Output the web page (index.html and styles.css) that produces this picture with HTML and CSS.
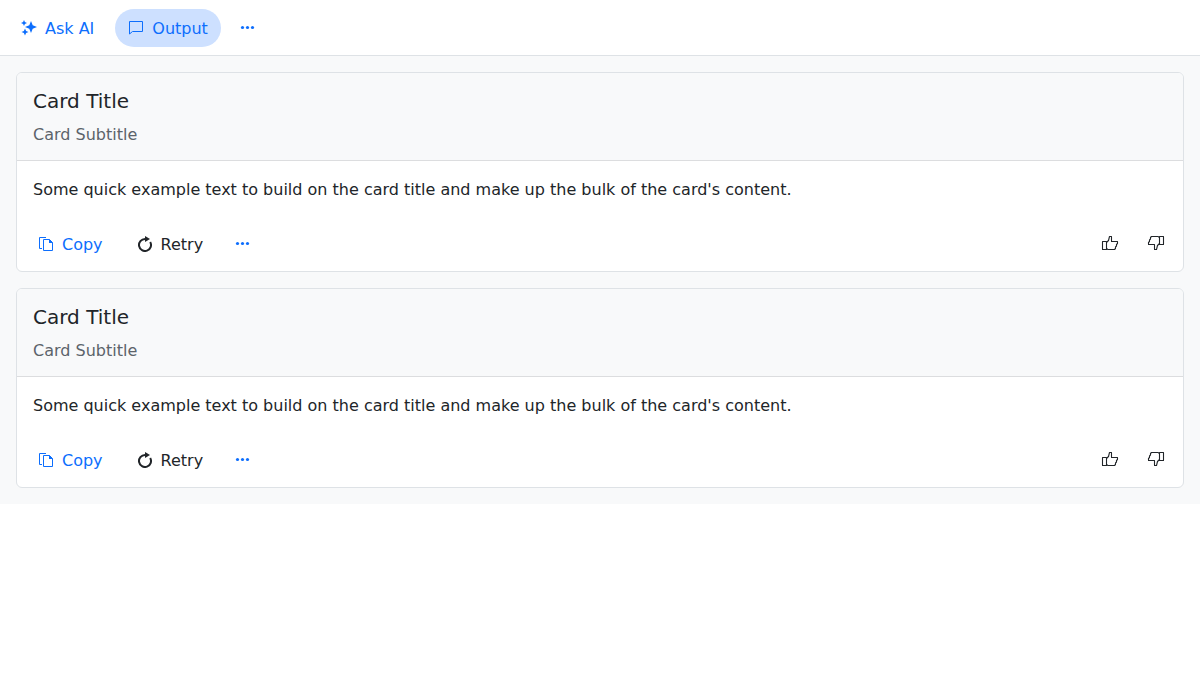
FILE: index.html
```html
<!DOCTYPE html>
<html lang="en">
<head>
<meta charset="utf-8">
<meta name="viewport" content="width=device-width, initial-scale=1">
<title>Output</title>
<link rel="stylesheet" href="styles.css">
</head>
<body>
<svg class="symbols" aria-hidden="true">
  <symbol id="sparkle" viewBox="0 0 16 16"><path fill="currentColor" d="M10 1L11.700 5.300L16 7L11.700 8.700L10 13L8.300 8.700L4 7L8.300 5.300ZM3 0L3.900 2.100L6 3L3.900 3.900L3 6L2.100 3.900L0 3L2.100 2.100ZM4 8.500L5.100 10.900L7.500 12L5.100 13.100L4 15.500L2.900 13.100L.5 12L2.900 10.900Z"/></symbol>
  <symbol id="comment" viewBox="0 0 16 16"><path fill="none" stroke="currentColor" d="M1.500 14V1.500H14.500V11.500H4.500L1.500 14"/></symbol>
  <symbol id="copy" viewBox="0 0 16 16"><path fill="none" stroke="currentColor" d="M8 1.500H1.500V12.500H4M5.500 3.500H11.500L14.500 6.500V14.500H5.500Z"/><path fill="currentColor" d="M11 3L15 7H11Z"/></symbol>
  <symbol id="retry" viewBox="0 0 16 16"><path fill="none" stroke="currentColor" stroke-width="2" d="M9 3H8A6 6 0 1 0 13.200 6"/><path fill="currentColor" d="M8 0L13 3L8 6Z"/></symbol>
  <symbol id="more" viewBox="0 0 16 16"><circle fill="currentColor" cx="2.500" cy="7.500" r="1.600"/><circle fill="currentColor" cx="7.500" cy="7.500" r="1.600"/><circle fill="currentColor" cx="12.500" cy="7.500" r="1.600"/></symbol>
  <symbol id="thumb" viewBox="0 0 18 16"><path fill="none" stroke="currentColor" stroke-width="1.100" stroke-linejoin="round" d="M1.500 6.500H5.500V14.500H1.500ZM5.500 7.500L7.500 5.500L8.500 1.500H10.500V6.500H16.500V8.500L15.500 9.500V11L14.500 12V13.500L13.500 14.500H7L5.500 13.500"/></symbol>
</svg>
<header class="toolbar">
  <button class="btn primary" type="button"><svg class="icon"><use href="#sparkle"/></svg><span class="label">Ask AI</span></button>
  <button class="btn primary active" type="button"><svg class="icon"><use href="#comment"/></svg><span class="label">Output</span></button>
  <button class="btn primary icon-btn" type="button" aria-label="More"><svg class="icon"><use href="#more"/></svg></button>
</header>
<main class="output">
  <article class="card">
    <div class="card-header">
      <h2 class="title">Card Title</h2>
      <p class="subtitle">Card Subtitle</p>
    </div>
    <p class="content">Some quick example text to build on the card title and make up the bulk of the card's content.</p>
    <div class="actions">
      <button class="btn primary" type="button"><svg class="icon"><use href="#copy"/></svg><span class="label">Copy</span></button>
      <button class="btn" type="button"><svg class="icon"><use href="#retry"/></svg><span class="label">Retry</span></button>
      <button class="btn primary icon-btn" type="button" aria-label="More"><svg class="icon"><use href="#more"/></svg></button>
      <div class="feedback">
        <button class="btn icon-btn" type="button" aria-label="Like"><svg class="icon thumb"><use href="#thumb"/></svg></button>
        <button class="btn icon-btn" type="button" aria-label="Dislike"><svg class="icon thumb down"><use href="#thumb"/></svg></button>
      </div>
    </div>
  </article>
  <article class="card">
    <div class="card-header">
      <h2 class="title">Card Title</h2>
      <p class="subtitle">Card Subtitle</p>
    </div>
    <p class="content">Some quick example text to build on the card title and make up the bulk of the card's content.</p>
    <div class="actions">
      <button class="btn primary" type="button"><svg class="icon"><use href="#copy"/></svg><span class="label">Copy</span></button>
      <button class="btn" type="button"><svg class="icon"><use href="#retry"/></svg><span class="label">Retry</span></button>
      <button class="btn primary icon-btn" type="button" aria-label="More"><svg class="icon"><use href="#more"/></svg></button>
      <div class="feedback">
        <button class="btn icon-btn" type="button" aria-label="Like"><svg class="icon thumb"><use href="#thumb"/></svg></button>
        <button class="btn icon-btn" type="button" aria-label="Dislike"><svg class="icon thumb down"><use href="#thumb"/></svg></button>
      </div>
    </div>
  </article>
</main>
</body>
</html>
```
FILE: styles.css
```css
* {
  box-sizing: border-box;
}

body {
  margin: 0;
  background: #fff;
  color: #212529;
  font: 16px/24px "DejaVu Sans", sans-serif;
}

.symbols {
  position: absolute;
  width: 0;
  height: 0;
}

.toolbar {
  display: flex;
  gap: 8px;
  padding: 9px 8px 8px;
  border-bottom: 1px solid #dee2e6;
}

.btn {
  display: flex;
  align-items: center;
  gap: 8px;
  padding: 5px 12px;
  border: 1px solid transparent;
  border-radius: 20px;
  background: transparent;
  color: #212529;
  font: inherit;
  white-space: nowrap;
}

.label {
  padding-top: 2px;
}

.primary {
  color: #0d6efd;
}

.active {
  background: #cde0ff;
}

.icon-btn {
  justify-content: center;
  width: 38px;
  height: 38px;
  padding: 0;
}

.icon {
  flex: none;
  width: 16px;
  height: 16px;
}

.thumb {
  width: 18px;
  margin-bottom: 2px;
}

.down {
  transform: rotate(180deg);
}

.output {
  display: flex;
  flex-direction: column;
  gap: 16px;
  padding: 16px;
  background: #f8f9fa;
}

.card {
  overflow: hidden;
  border: 1px solid #dee2e6;
  border-radius: 6px;
  background: #fff;
}

.card-header {
  display: flex;
  flex-direction: column;
  gap: 10px;
  padding: 16px 16px 13px;
  border-bottom: 1px solid #dcdddf;
  background: #f8f9fa;
}

.title {
  margin: 0;
  font-size: 20px;
  font-weight: 400;
  line-height: 24px;
}

.subtitle {
  margin: 0;
  color: #5c636a;
}

.content {
  margin: 0;
  padding: 17px 16px 15px;
}

.actions {
  display: flex;
  gap: 8px;
  padding: 8px;
}

.feedback {
  display: flex;
  gap: 8px;
  margin-left: auto;
}
```
